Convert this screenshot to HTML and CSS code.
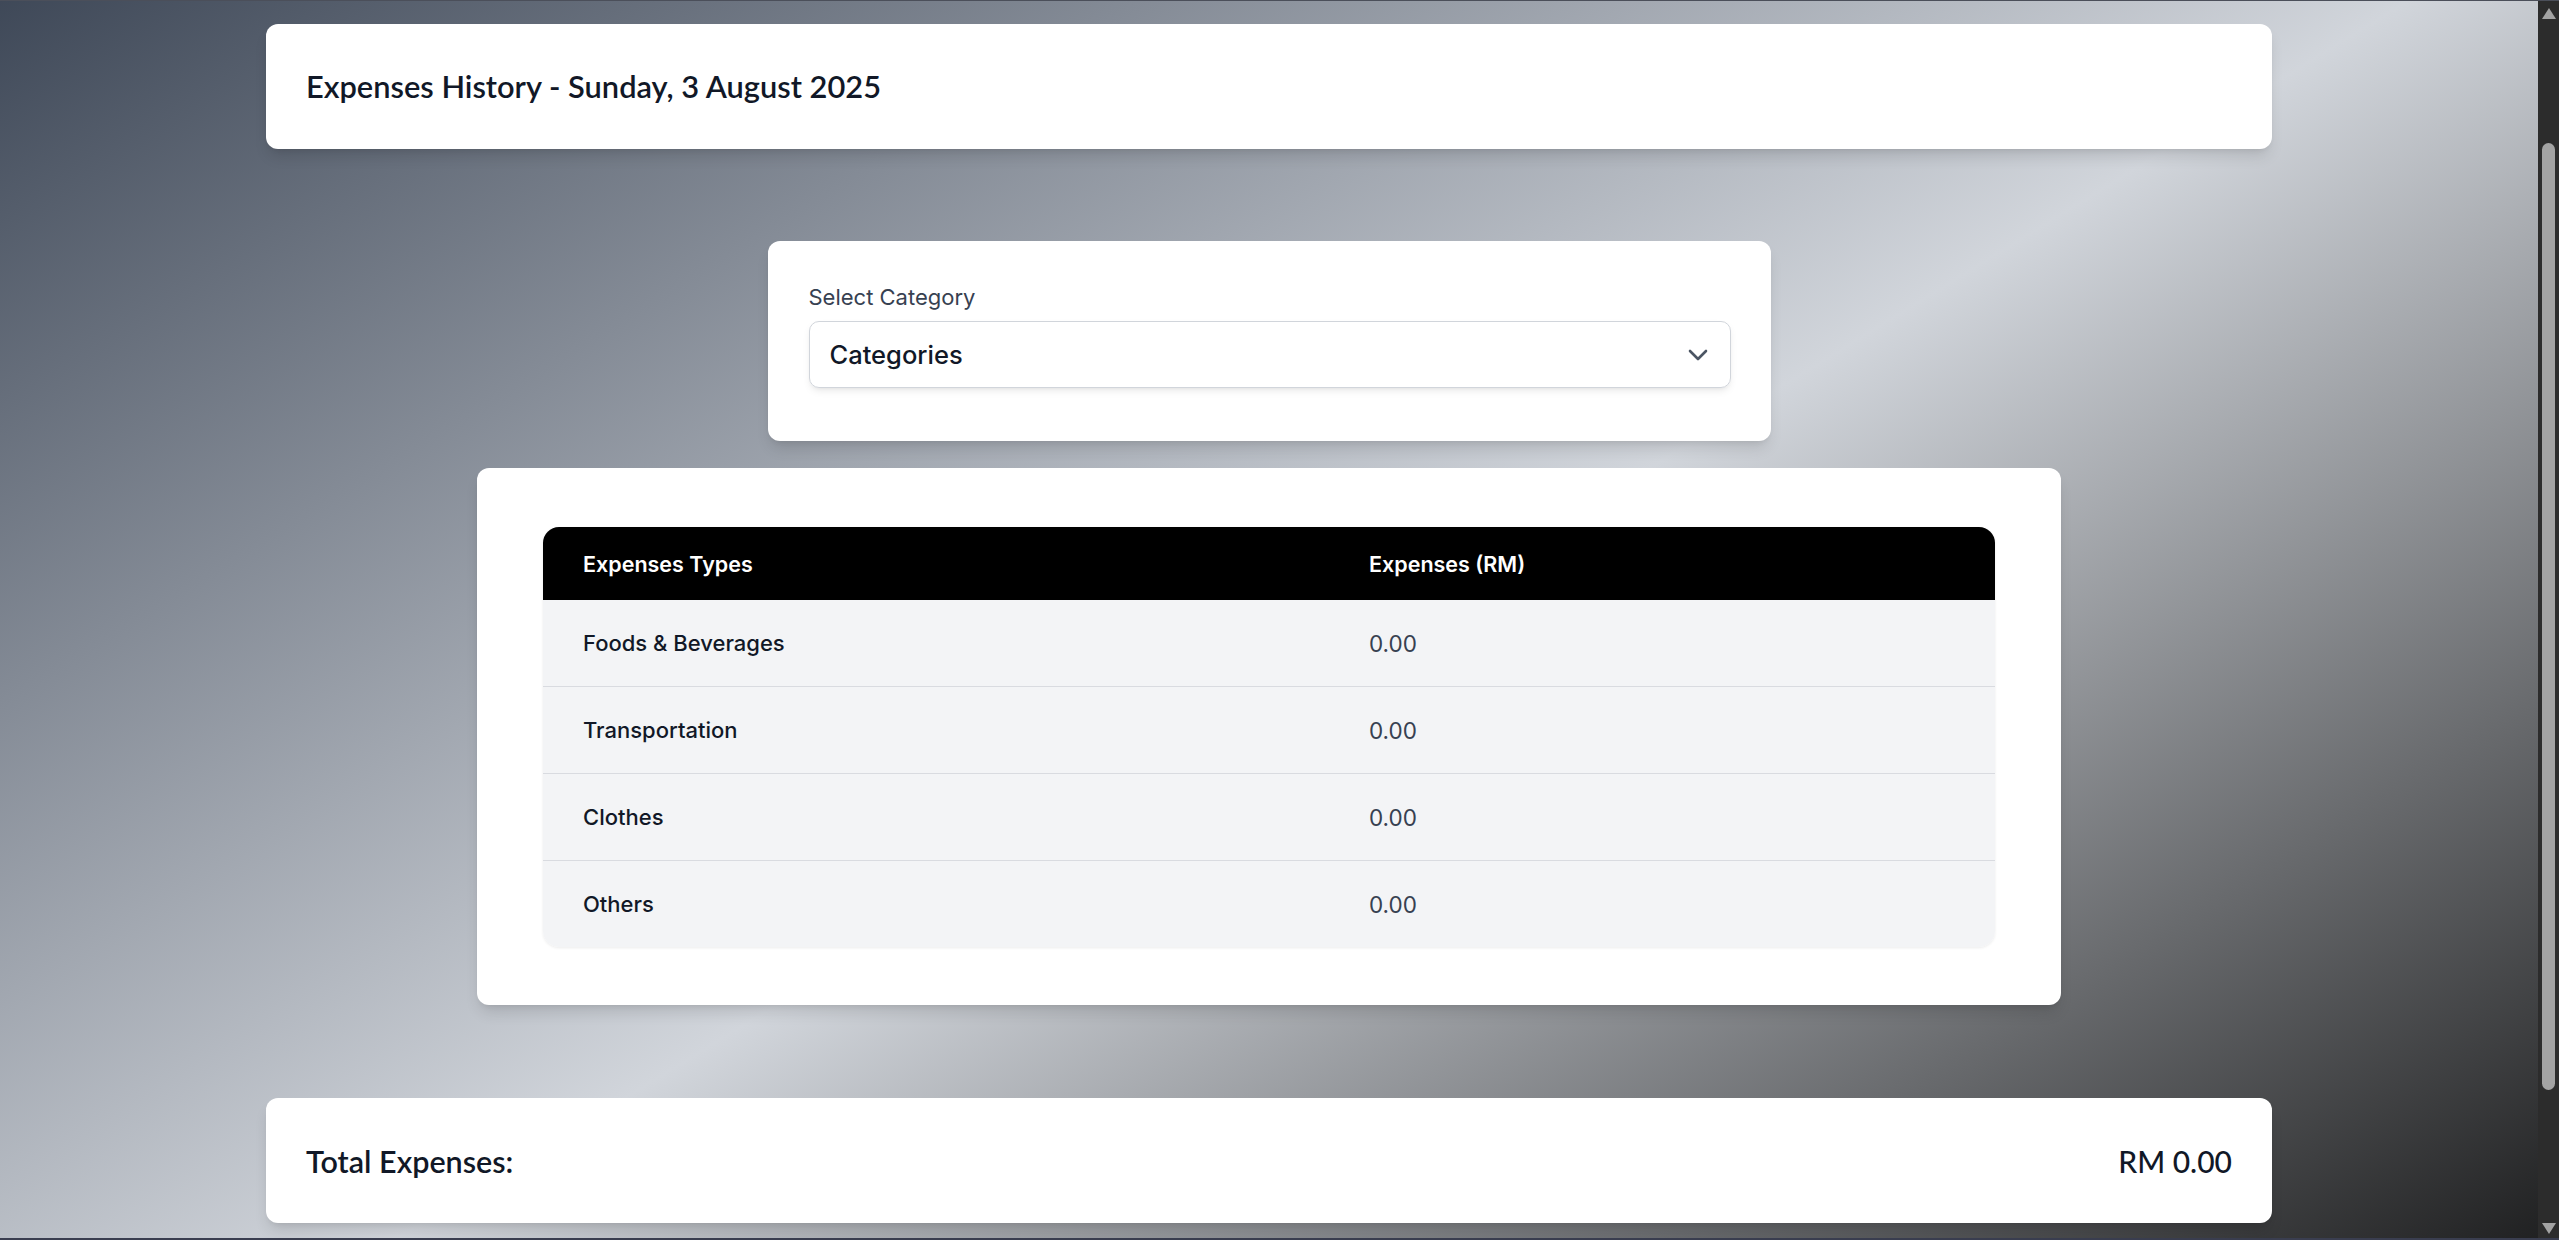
FILE: index.html
```html
<!DOCTYPE html>
<html lang="en">
<head>
<meta charset="utf-8">
<title>Expenses History</title>
<link rel="stylesheet" href="styles.css">
</head>
<body>
<div class="frame">
  <main class="page">
    <section class="card head-card">
      <h1 class="title">Expenses History - Sunday, 3 August 2025</h1>
    </section>

    <section class="card select-card">
      <label class="field-label" for="cat">Select Category</label>
      <div class="select" id="cat">
        <span class="select-value">Categories</span>
        <svg class="chevron" width="20" height="12" viewBox="0 0 20 12" aria-hidden="true">
          <path d="M2 2 L10 10 L18 2" fill="none" stroke="#4b5563" stroke-width="2.6" stroke-linecap="round" stroke-linejoin="round"/>
        </svg>
      </div>
    </section>

    <section class="card table-card">
      <table class="exp-table">
        <thead>
          <tr><th class="col-type">Expenses Types</th><th>Expenses (RM)</th></tr>
        </thead>
        <tbody>
          <tr><td class="type">Foods &amp; Beverages</td><td class="amt">0.00</td></tr>
          <tr><td class="type">Transportation</td><td class="amt">0.00</td></tr>
          <tr><td class="type">Clothes</td><td class="amt">0.00</td></tr>
          <tr><td class="type">Others</td><td class="amt">0.00</td></tr>
        </tbody>
      </table>
    </section>

    <section class="card total-card">
      <span class="total-label">Total Expenses:</span>
      <span class="total-value">RM 0.00</span>
    </section>
  </main>
  <aside class="scrollbar" aria-hidden="true">
    <span class="arrow up"></span>
    <span class="track"><span class="thumb"></span></span>
    <span class="arrow down"></span>
  </aside>
</div>
</body>
</html>
```

FILE: styles.css
```css
* { box-sizing: border-box; }

html, body {
  margin: 0;
  padding: 0;
  height: 100%;
  overflow: hidden;
}

body {
  font-family: "Inter", "Noto Sans", sans-serif;
  color: #111827;
  background: #3d4150;
}

.frame {
  display: flex;
  height: 1240px;
  border-top: 1px solid #4b4f5a;
  border-bottom: 2px solid #3a3e50;
}

.page {
  flex: 1;
  display: flex;
  flex-direction: column;
  align-items: center;
  padding-top: 23px;
  background-image: linear-gradient(to bottom right, #374151, #d1d5db, #000000);
  background-size: 100% 1562px;
  background-position: 0 -80px;
  background-repeat: no-repeat;
}

.card {
  background: #ffffff;
  border-radius: 12px;
  box-shadow: 0 10px 15px -3px rgba(0,0,0,0.12), 0 4px 6px -4px rgba(0,0,0,0.1);
}

.head-card {
  width: 2006px;
  height: 125px;
  padding: 0 40px;
  display: flex;
  align-items: center;
}

.title {
  margin: 0;
  font-family: "Lato", "Noto Sans", sans-serif;
  font-size: 30.8px;
  font-weight: 600;
  color: #111827;
}

.select-card {
  margin-top: 92px;
  width: 1003px;
  height: 200px;
  padding: 42px 40px 0 41px;
  display: flex;
  flex-direction: column;
}

.field-label {
  font-size: 22px;
  line-height: 28px;
  color: #374151;
}

.select {
  margin-top: 10px;
  height: 67px;
  border: 1px solid #d1d5db;
  border-radius: 10px;
  box-shadow: 0 4px 8px -2px rgba(0,0,0,0.1), 0 2px 4px -2px rgba(0,0,0,0.06);
  display: flex;
  align-items: center;
  justify-content: space-between;
  padding: 0 22px 0 20px;
}

.select-value {
  font-size: 25.5px;
  font-weight: 500;
  color: #111827;
}

.chevron { display: block; }

.table-card {
  margin-top: 27px;
  width: 1584px;
  height: 537px;
  padding: 59px 66px;
}

.exp-table {
  width: 100%;
  border-collapse: separate;
  border-spacing: 0;
  border-radius: 16px;
  overflow: hidden;
  box-shadow: 0 1px 3px rgba(0,0,0,0.08);
  font-size: 22px;
}

.exp-table th {
  background: #000000;
  color: #ffffff;
  font-size: 21.5px;
  font-weight: 600;
  text-align: left;
  height: 73px;
  padding: 0 40px;
}

.exp-table th.col-type { width: 786px; }

.exp-table td {
  background: #f3f4f6;
  height: 86px;
  padding: 0 40px;
}

.exp-table tbody tr + tr td {
  border-top: 1px solid #d9dbe0;
  height: 87px;
}

.type {
  color: #111827;
  font-weight: 500;
}

.amt {
  color: #374151;
  font-weight: 400;
  font-size: 22.5px;
}

.total-card {
  margin-top: 93px;
  width: 2006px;
  height: 125px;
  padding: 0 40px;
  display: flex;
  align-items: center;
  justify-content: space-between;
  font-family: "Lato", "Noto Sans", sans-serif;
  font-size: 30.5px;
  font-weight: 600;
  color: #111827;
}

.total-value { font-weight: 500; font-size: 30px; }

.scrollbar {
  width: 21px;
  flex: none;
  background: #2c2c2c;
  display: flex;
  flex-direction: column;
  align-items: center;
}

.arrow {
  width: 0;
  height: 0;
  border-left: 7px solid transparent;
  border-right: 7px solid transparent;
  flex: none;
}

.arrow.up {
  margin-top: 7px;
  border-bottom: 11px solid #a3a3a3;
}

.arrow.down {
  margin-bottom: 4px;
  border-top: 11px solid #a3a3a3;
}

.track {
  flex: 1;
  width: 100%;
  display: flex;
  flex-direction: column;
  align-items: center;
}

.thumb {
  margin-top: 124px;
  width: 13px;
  height: 947px;
  border-radius: 7px;
  background: #a3a3a3;
}
```
